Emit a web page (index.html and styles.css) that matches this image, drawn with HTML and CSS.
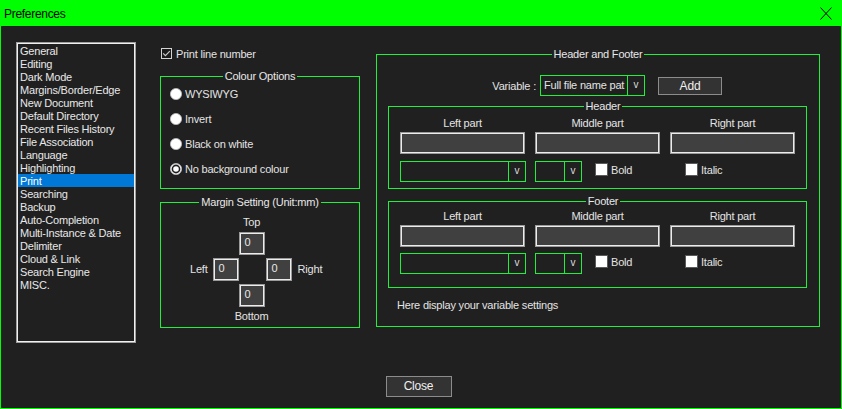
FILE: index.html
```html
<!DOCTYPE html>
<html>
<head>
<meta charset="utf-8">
<title>Preferences</title>
<link rel="stylesheet" href="styles.css">
</head>
<body>
<div class="window">
  <div class="titlebar">
    <span class="title">Preferences</span>
    <svg class="close-x" width="12" height="13" viewBox="0 0 12 13"><path d="M0.5 0.5 L11.5 12.5 M11.5 0.5 L0.5 12.5" stroke="#000" stroke-width="1" fill="none"/></svg>
  </div>
  <div class="content">
    <div class="main">
      <div class="list">
        <div class="item">General</div>
        <div class="item">Editing</div>
        <div class="item">Dark Mode</div>
        <div class="item">Margins/Border/Edge</div>
        <div class="item">New Document</div>
        <div class="item">Default Directory</div>
        <div class="item">Recent Files History</div>
        <div class="item">File Association</div>
        <div class="item">Language</div>
        <div class="item">Highlighting</div>
        <div class="item selected">Print</div>
        <div class="item">Searching</div>
        <div class="item">Backup</div>
        <div class="item">Auto-Completion</div>
        <div class="item">Multi-Instance &amp; Date</div>
        <div class="item">Delimiter</div>
        <div class="item">Cloud &amp; Link</div>
        <div class="item">Search Engine</div>
        <div class="item">MISC.</div>
      </div>

      <div class="col2">
        <div class="check-row">
          <svg class="dark-check" width="11" height="11" viewBox="0 0 11 11"><rect x="0.5" y="0.5" width="10" height="10" fill="#1c1c1c" stroke="#d4d4d4"/><path d="M2.2 5.4 L4.4 7.7 L8.8 3.2" stroke="#c8c8c8" stroke-width="1.2" fill="none"/></svg>
          <span>Print line number</span>
        </div>

        <div class="group colour-group">
          <div class="legend">Colour Options</div>
          <div class="radios">
            <div class="radio-row"><svg width="12" height="12" viewBox="0 0 12 12"><circle cx="6" cy="6" r="5.6" fill="#fff" stroke="#bdbdbd" stroke-width="0.8"/></svg><span>WYSIWYG</span></div>
            <div class="radio-row"><svg width="12" height="12" viewBox="0 0 12 12"><circle cx="6" cy="6" r="5.6" fill="#fff" stroke="#bdbdbd" stroke-width="0.8"/></svg><span>Invert</span></div>
            <div class="radio-row"><svg width="12" height="12" viewBox="0 0 12 12"><circle cx="6" cy="6" r="5.6" fill="#fff" stroke="#bdbdbd" stroke-width="0.8"/></svg><span>Black on white</span></div>
            <div class="radio-row"><svg width="12" height="12" viewBox="0 0 12 12"><circle cx="6" cy="6" r="5.6" fill="#fff" stroke="#bdbdbd" stroke-width="0.8"/><circle cx="6" cy="6" r="3.6" fill="#fff" stroke="#202020" stroke-width="1.6"/></svg><span>No background colour</span></div>
          </div>
        </div>

        <div class="group margin-group">
          <div class="legend">Margin Setting (Unit:mm)</div>
          <div class="cross">
            <div class="lbl-top">Top</div>
            <div class="mbox box-top">0</div>
            <div class="lbl-left">Left</div>
            <div class="mbox box-left">0</div>
            <div class="mbox box-right">0</div>
            <div class="lbl-right">Right</div>
            <div class="mbox box-bottom">0</div>
            <div class="lbl-bottom">Bottom</div>
          </div>
        </div>
      </div>

      <div class="group hf-group">
        <div class="legend">Header and Footer</div>
        <div class="var-row">
          <div class="var-label">Variable :</div>
          <div class="combo var-combo"><span class="combo-text">Full file name pat</span><span class="combo-btn">v</span></div>
          <div class="button add-btn">Add</div>
        </div>

        <div class="group sub-group header-group">
          <div class="legend">Header</div>
          <div class="parts">
            <div class="part-label">Left part</div>
            <div class="part-label">Middle part</div>
            <div class="part-label">Right part</div>
            <div class="tbox"></div>
            <div class="tbox"></div>
            <div class="tbox"></div>
          </div>
          <div class="opts">
            <div class="combo font-combo"><span class="combo-text"></span><span class="combo-btn">v</span></div>
            <div class="opt-mid">
              <div class="combo size-combo"><span class="combo-text"></span><span class="combo-btn">v</span></div>
              <div class="cb-label bold"><span class="white-box"></span><span>Bold</span></div>
            </div>
            <div class="cb-label italic"><span class="white-box"></span><span>Italic</span></div>
          </div>
        </div>

        <div class="group sub-group footer-group">
          <div class="legend">Footer</div>
          <div class="parts">
            <div class="part-label">Left part</div>
            <div class="part-label">Middle part</div>
            <div class="part-label">Right part</div>
            <div class="tbox"></div>
            <div class="tbox"></div>
            <div class="tbox"></div>
          </div>
          <div class="opts">
            <div class="combo font-combo"><span class="combo-text"></span><span class="combo-btn">v</span></div>
            <div class="opt-mid">
              <div class="combo size-combo"><span class="combo-text"></span><span class="combo-btn">v</span></div>
              <div class="cb-label bold"><span class="white-box"></span><span>Bold</span></div>
            </div>
            <div class="cb-label italic"><span class="white-box"></span><span>Italic</span></div>
          </div>
        </div>

        <div class="var-info">Here display your variable settings</div>
      </div>
    </div>

    <div class="footer">
      <div class="button close-btn">Close</div>
    </div>
  </div>
</div>
</body>
</html>
```

FILE: styles.css
```css
* { box-sizing: border-box; }

html, body {
  margin: 0;
  padding: 0;
  background: #202020;
}

body {
  font-family: "Liberation Sans", Arial, sans-serif;
  font-size: 11px;
  letter-spacing: -0.2px;
  color: #e4e4e4;
}

.window {
  width: 842px;
  height: 409px;
  background: #00ff00;
  padding: 0 1px 1px 1px;
  display: flex;
  flex-direction: column;
}

.titlebar {
  height: 26px;
  flex: none;
  display: flex;
  align-items: center;
  justify-content: space-between;
  padding: 1px 9px 0 3px;
  color: #000;
  font-size: 12px;
  letter-spacing: -0.3px;
}

.title { line-height: 14px; }

.close-x { display: block; }

.content {
  flex: 1;
  background: #202020;
  padding: 16px 0 0 15px;
  display: flex;
  flex-direction: column;
}

.main {
  display: flex;
  align-items: flex-start;
  height: 301px;
}

/* list */
.list {
  width: 120px;
  height: 301px;
  border: 1px solid #a0a0a0;
  box-shadow: inset 0 0 0 1px #f0f0f0;
  padding: 1px;
  background: #202020;
}

.item {
  height: 13px;
  line-height: 14px;
  padding-left: 2px;
  white-space: nowrap;
  color: #e8e8e8;
}

.item.selected {
  background: #0078d7;
  color: #fff;
}

/* column 2 */
.col2 {
  width: 200px;
  margin-left: 24px;
  display: flex;
  flex-direction: column;
}

.check-row {
  display: flex;
  align-items: center;
  height: 13px;
  margin-top: 5px;
  padding-left: 1px;
  gap: 4px;
  line-height: 13px;
}

.check-row span { margin-top: 2px; }

.dark-check { display: block; }

.group {
  border: 1px solid #1ff03e;
}

.legend {
  width: max-content;
  margin: -7px auto 0;
  padding: 0 2px;
  line-height: 13px;
  height: 13px;
  background: #202020;
  color: #e8e8e8;
}

.colour-group {
  margin-top: 16px;
  height: 113px;
}

.radios {
  margin-top: -2px;
  padding-left: 9px;
}

.radio-row {
  height: 25px;
  display: flex;
  align-items: center;
  gap: 3px;
}

.radio-row svg { display: block; flex: none; }

.margin-group {
  margin-top: 13px;
  height: 126px;
}

.cross {
  display: grid;
  grid-template-columns: auto 26px 27px 26px auto;
  grid-template-rows: 13px 23px 23px 23px 13px;
  row-gap: 3px;
  margin-top: 7px;
  margin-left: 29px;
  width: max-content;
  line-height: 13px;
}

.lbl-top { grid-column: 3; grid-row: 1; justify-self: start; width: 26px; text-align: center; }
.box-top { grid-column: 3; grid-row: 2; }
.lbl-left { grid-column: 1; grid-row: 3; align-self: center; margin-right: 5px; }
.box-left { grid-column: 2; grid-row: 3; }
.box-right { grid-column: 4; grid-row: 3; }
.lbl-right { grid-column: 5; grid-row: 3; align-self: center; margin-left: 6px; }
.box-bottom { grid-column: 3; grid-row: 4; }
.lbl-bottom { grid-column: 2 / span 3; grid-row: 5; justify-self: center; margin-left: -1px; }

.mbox {
  width: 26px;
  height: 23px;
  background: #404040;
  border: 1px solid #9a9a9a;
  box-shadow: inset 0 0 0 1px #ececec;
  padding-left: 5px;
  line-height: 19px;
  color: #e8e8e8;
}

/* column 3 */
.hf-group {
  width: 444px;
  height: 273px;
  margin-left: 16px;
  margin-top: 12px;
  display: flex;
  flex-direction: column;
}

.var-row {
  display: flex;
  align-items: center;
  margin-top: 14px;
  height: 21px;
}

.var-label {
  width: 159px;
  text-align: right;
}

.combo {
  border: 1px solid #1ff03e;
  height: 21px;
  display: flex;
  background: #202020;
}

.combo-text {
  flex: 1;
  min-width: 0;
  white-space: nowrap;
  line-height: 19px;
  padding-left: 3px;
}

.combo-btn {
  width: 17px;
  flex: none;
  border-left: 1px solid #1ff03e;
  text-align: center;
  line-height: 18px;
  font-size: 10px;
  color: #dcdcdc;
}

.var-combo {
  width: 105px;
  margin-left: 4px;
}

.button {
  background: #333;
  border: 1px solid #8c8c8c;
  text-align: center;
  color: #f0f0f0;
}

.add-btn {
  width: 64px;
  height: 18px;
  line-height: 16px;
  margin-left: 13px;
  font-size: 12px;
}

.sub-group {
  width: 419px;
  margin-left: 11px;
  padding-left: 11px;
}

.header-group {
  margin-top: 10px;
  height: 83px;
}

.footer-group {
  margin-top: 12px;
  height: 87px;
}

.parts {
  display: grid;
  grid-template-columns: 125px 125px 125px;
  column-gap: 10px;
  row-gap: 2px;
  margin-top: 4px;
}

.footer-group .parts { margin-top: 2px; }

.part-label {
  text-align: center;
  line-height: 13px;
  height: 13px;
}

.tbox {
  height: 22px;
  background: #404040;
  border: 1px solid #9a9a9a;
  box-shadow: inset 0 0 0 1px #ececec;
}

.opts {
  display: grid;
  grid-template-columns: 125px 125px 125px;
  column-gap: 10px;
  margin-top: 7px;
  align-items: center;
}

.footer-group .opts { margin-top: 6px; }

.font-combo { width: 126px; }

.opt-mid {
  display: flex;
  align-items: center;
}

.size-combo { width: 47px; }

.cb-label {
  display: flex;
  align-items: center;
  gap: 3px;
  line-height: 13px;
  margin-top: -4px;
}

.bold { margin-left: 13px; }
.italic { padding-left: 15px; }

.white-box {
  width: 13px;
  height: 13px;
  background: #fff;
  border: 1px solid #5a5a5a;
  flex: none;
}

.cb-label span:last-child { margin-top: 2px; }

.var-info {
  margin-top: 11px;
  padding-left: 20px;
  line-height: 13px;
}

.footer {
  display: flex;
  justify-content: center;
  padding-right: 20px;
  margin-top: 33px;
}

.close-btn {
  width: 66px;
  height: 21px;
  line-height: 19px;
  font-size: 12px;
}
```
